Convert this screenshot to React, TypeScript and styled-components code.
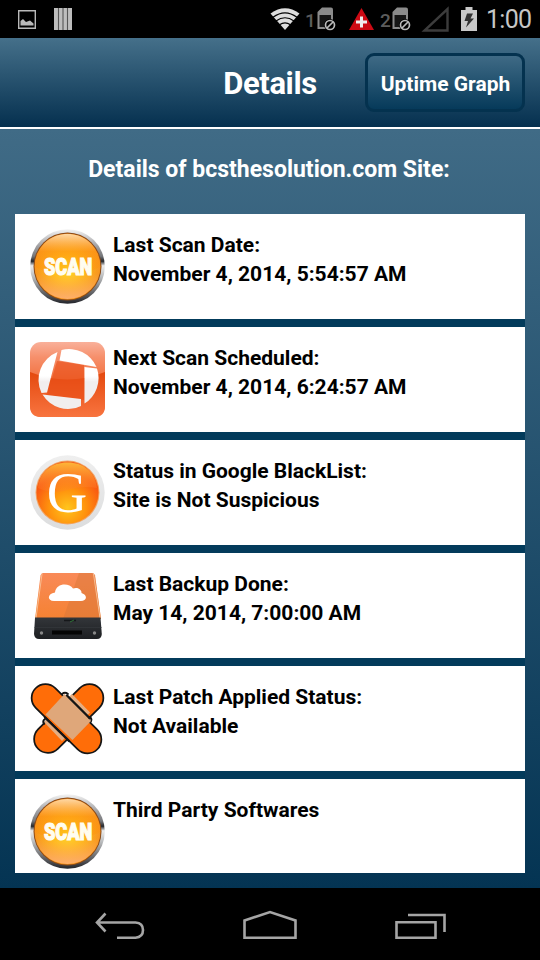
import type { ReactNode } from 'react';
import styled, { createGlobalStyle } from 'styled-components';

const GlobalStyle = createGlobalStyle`
  * {
    box-sizing: border-box;
  }
  body {
    margin: 0;
    background: #000;
    font-family: Roboto, 'Liberation Sans', sans-serif;
  }
`;

const Screen = styled.div`
  display: flex;
  flex-direction: column;
  width: 540px;
  height: 960px;
  overflow: hidden;
  background: #000;
`;

const StatusBar = styled.div`
  display: flex;
  justify-content: space-between;
  height: 38px;
  padding: 0 9px 0 18px;
  background: #000;
`;
const StatusGroup = styled.div`
  display: flex;
  align-items: center;
`;
const StatusIcon = styled.svg<{ $gap?: number }>`
  flex: none;
  margin-left: ${({ $gap = 0 }) => $gap}px;
`;
const SimNumber = styled.span<{ $gap: number }>`
  width: 11px;
  margin: 3px 0 0 ${({ $gap }) => $gap}px;
  font-size: 19px;
  font-weight: 500;
  line-height: 20px;
  color: #5c5c5c;
`;
const Clock = styled.span`
  width: 45px;
  margin: 2px 0 0 9px;
  font-size: 25px;
  line-height: 30px;
  letter-spacing: -0.7px;
  white-space: nowrap;
  color: #c6c6c6;
`;

const Header = styled.header`
  display: grid;
  grid-template-columns: 1fr auto 1fr;
  align-items: center;
  height: 91px;
  padding: 0 15px;
  border-bottom: 2px solid #fff;
  background: linear-gradient(#45708a, #05304f);
`;
const Title = styled.h1`
  grid-column: 2;
  margin: 0;
  padding-top: 2px;
  font-size: 31px;
  font-weight: 700;
  line-height: 36px;
  letter-spacing: -0.4px;
  color: #fff;
`;
const HeaderButton = styled.button`
  justify-self: end;
  width: 160px;
  height: 59px;
  padding: 2px 0 0 1px;
  border: 3px solid #04324f;
  border-radius: 9px;
  background: linear-gradient(#3f6a85, #063a5a);
  font-family: inherit;
  font-size: 21px;
  font-weight: 700;
  white-space: nowrap;
  color: #fff;
`;

const Content = styled.main`
  height: 759px;
  padding: 0 15px 15px;
  background: linear-gradient(#406b86, #043453);
`;
const Heading = styled.h2`
  display: flex;
  align-items: center;
  justify-content: center;
  height: 85px;
  margin: 0;
  padding: 0 2px 5px 0;
  font-size: 23px;
  font-weight: 700;
  white-space: nowrap;
  color: #fff;
`;
const List = styled.ul`
  display: flex;
  flex-direction: column;
  gap: 8px;
  height: 659px;
  margin: 0;
  padding: 0;
  overflow: hidden;
  list-style: none;
  background: #033b5b;
`;
const Row = styled.li`
  display: flex;
  flex: none;
  gap: 8px;
  height: 105px;
  padding: 15px;
  background: #fff;
`;
const RowIcon = styled.svg`
  flex: none;
  width: 75px;
  height: 75px;
  overflow: visible;
`;
const ScanLabel = styled.text`
  font-family: Roboto, 'Liberation Sans', sans-serif;
  font-size: 24px;
  font-weight: 900;
  fill: #fffdf0;
  stroke: #fffdf0;
  stroke-width: 1.2px;
`;
const RowText = styled.div`
  padding-top: 2px;
  font-size: 21px;
  font-weight: 700;
  line-height: 29px;
  white-space: nowrap;
  color: #000;
`;

const NavBar = styled.nav`
  display: grid;
  grid-template-columns: repeat(3, 150px);
  justify-content: center;
  height: 72px;
  padding-top: 20px;
  background: #000;
`;
const NavButton = styled.button`
  display: flex;
  justify-content: center;
  padding: 0;
  border: 0;
  background: none;
`;

const SimIcon = () => (
  <StatusIcon $gap={1} width="20" height="24" viewBox="0 0 20 24" fill="none">
    <path d="M5 0.5H14Q16 0.5 16 2.5V22H0.5V5Z" fill="#8b8b8b" />
    <path d="M2.5 8H14V20H2.5Z" fill="#161616" />
    <circle cx="13" cy="18" r="6" fill="#000" />
    <circle cx="13" cy="18" r="4.5" stroke="#bababa" strokeWidth="1.7" />
    <path d="M10 21L16 15" stroke="#bababa" strokeWidth="1.7" />
  </StatusIcon>
);

const ScanIcon = ({ id }: { id: string }) => (
  <RowIcon viewBox="0 0 75 75">
    <defs>
      <linearGradient id={`${id}-ring`} x2="0" y2="1">
        <stop offset="0" stopColor="#f4f4f4" />
        <stop offset="0.22" stopColor="#a3a3a6" />
        <stop offset="0.36" stopColor="#77787b" />
        <stop offset="0.43" stopColor="#26282c" />
        <stop offset="0.49" stopColor="#ededed" />
        <stop offset="0.64" stopColor="#b9bbbd" />
        <stop offset="0.84" stopColor="#68696c" />
        <stop offset="1" stopColor="#23252b" />
      </linearGradient>
      <radialGradient id={`${id}-face`} cx="0.5" cy="0.53" r="0.55">
        <stop offset="0" stopColor="#ffdf20" />
        <stop offset="0.45" stopColor="#ffb912" />
        <stop offset="1" stopColor="#f4881a" />
      </radialGradient>
      <linearGradient id={`${id}-gloss`} x2="0" y2="1">
        <stop offset="0" stopColor="#ffe0b4" stopOpacity="0.9" />
        <stop offset="0.45" stopColor="#ff9512" stopOpacity="0.6" />
        <stop offset="1" stopColor="#ff8f00" stopOpacity="0.25" />
      </linearGradient>
      <linearGradient id={`${id}-shine`} x2="0" y2="1">
        <stop offset="0.6" stopColor="#ffb060" stopOpacity="0.1" />
        <stop offset="1" stopColor="#ffb27a" stopOpacity="0.85" />
      </linearGradient>
    </defs>
    <circle cx="37.5" cy="37.5" r="37.3" fill={`url(#${id}-ring)`} />
    <circle cx="37.5" cy="37.5" r="34" fill="#8a4a18" />
    <circle cx="37.5" cy="37.5" r="33" fill={`url(#${id}-face)`} />
    <circle cx="37.5" cy="37.5" r="32.5" fill={`url(#${id}-shine)`} />
    <path
      d="M5.5 38C5 19 19 5 37.5 5S70 19 69.5 38Q60 44 37.5 44T5.5 38Z"
      fill={`url(#${id}-gloss)`}
    />
    <g transform="translate(14 45.5) scale(0.755 1.03)">
      <ScanLabel>SCAN</ScanLabel>
    </g>
  </RowIcon>
);

const ScheduleIcon = () => (
  <RowIcon viewBox="0 0 75 75">
    <defs>
      <linearGradient id="schedule-bg" x2="0" y2="1">
        <stop offset="0" stopColor="#f9b09a" />
        <stop offset="0.2" stopColor="#f6906c" />
        <stop offset="0.5" stopColor="#f2713f" />
        <stop offset="1" stopColor="#f3672f" />
      </linearGradient>
      <linearGradient id="schedule-low" x2="0" y2="1">
        <stop offset="0" stopColor="#e4490f" />
        <stop offset="1" stopColor="#f8743f" />
      </linearGradient>
      <linearGradient id="schedule-blade" x2="0" y2="1">
        <stop offset="0.45" stopColor="#fff" />
        <stop offset="0.55" stopColor="#f1eeee" />
      </linearGradient>
    </defs>
    <rect width="75" height="75" rx="11" fill="url(#schedule-bg)" />
    <path
      d="M0 30Q37 45 75 30V64Q75 75 64 75H11Q0 75 0 64Z"
      fill="url(#schedule-low)"
    />
    <path d="M27 19L54 23V58L17 53Z" fill="#e94f18" opacity="0.6" />
    <path
      d="M27.5 10L17 50.5L11.5 51A30 30 0 0 1 27.500 10ZM31.500 8L29.500 18.500L66.500 25A30 30 0 0 0 31.500 8ZM54.500 25L67 26.500A30 30 0 0 1 54.500 61.500ZM12.500 52.500L51 57V64A30 30 0 0 1 12.500 52.500Z"
      fill="url(#schedule-blade)"
    />
  </RowIcon>
);

const GoogleIcon = () => (
  <RowIcon viewBox="0 0 75 75">
    <defs>
      <linearGradient id="g-ring" x2="0" y2="1">
        <stop offset="0" stopColor="#efefef" />
        <stop offset="1" stopColor="#dcddde" />
      </linearGradient>
      <radialGradient id="g-face" cx="0.5" cy="0.75" r="0.75">
        <stop offset="0" stopColor="#ffc51c" />
        <stop offset="0.4" stopColor="#ff920d" />
        <stop offset="0.75" stopColor="#f95a12" />
        <stop offset="1" stopColor="#f4601e" />
      </radialGradient>
      <linearGradient id="g-gloss" x2="0" y2="1">
        <stop offset="0" stopColor="#ffc53c" stopOpacity="0.85" />
        <stop offset="1" stopColor="#ff7a2c" stopOpacity="0.25" />
      </linearGradient>
    </defs>
    <circle cx="37.5" cy="37.5" r="37.2" fill="url(#g-ring)" />
    <circle cx="37.5" cy="37.5" r="32" fill="#f1a565" />
    <circle cx="37.5" cy="37.5" r="31" fill="url(#g-face)" />
    <path
      d="M8 33C10 16 22 7.5 37.5 7.5S65 16 67 33Q52 30 37.5 35T8 33Z"
      fill="url(#g-gloss)"
    />
    <text
      x="37"
      y="57"
      textAnchor="middle"
      fontFamily="'Liberation Serif', serif"
      fontSize="56"
      fill="#fff"
    >
      G
    </text>
  </RowIcon>
);

const BackupIcon = () => (
  <RowIcon viewBox="0 0 75 75">
    <defs>
      <linearGradient id="drive-top" x2="0" y2="1">
        <stop offset="0" stopColor="#f98a58" />
        <stop offset="1" stopColor="#f58232" />
      </linearGradient>
      <linearGradient id="drive-base" x2="0" y2="1">
        <stop offset="0" stopColor="#33363a" />
        <stop offset="1" stopColor="#1d1f22" />
      </linearGradient>
    </defs>
    <path d="M13 5H62Q64.5 5 65 7.5L71 51H5L10.5 7.5Q11 5 13 5Z" fill="url(#drive-top)" />
    <path d="M49 5H62Q64.5 5 65 7.5L71 51H33Z" fill="#d9773a" opacity="0.5" />
    <path d="M12 6L6 50M63.5 6L70 50" stroke="#f9bd8f" strokeWidth="1" />
    <path d="M5 49.5H70.5L71.8 66Q71.5 71 67 71H9Q4.5 71 4 66Z" fill="url(#drive-base)" />
    <path d="M4.5 59.5H71.5" stroke="#34373b" strokeWidth="0.8" />
    <rect x="22" y="62.5" width="30" height="4" fill="#050505" />
    <circle cx="11.5" cy="65" r="1.7" fill="#888" />
    <circle cx="64.5" cy="65" r="1.7" fill="#888" />
    <path d="M34 52.5H46" stroke="#15171a" strokeWidth="1.5" />
    <path d="M40 54L44 52" stroke="#2f7138" strokeWidth="1" />
    <path
      d="M24 33C17 33 17 25.5 25 24.5C26 15 39 14.5 43 20.5C48 18.5 52 22 51.500 25C58 27 57 33 51 33Z"
      fill="#fff"
    />
  </RowIcon>
);

const PatchIcon = () => (
  <RowIcon viewBox="0 0 75 75" strokeLinecap="round">
    <path d="M59.500 17L18 58" stroke="#151515" strokeWidth="29.500" />
    <path d="M59.500 17L18 58" stroke="#ff6d08" strokeWidth="26" />
    <path d="M42 13L60 31.5L32 60L14 41Z" fill="#e5ae82" />
    <path
      d="M32 13Q35 10.5 38 13M60 36Q63 38 60 42M15 38Q12 40 14 43"
      stroke="#151515"
      strokeWidth="1.8"
      fill="none"
    />
    <path d="M15.5 17L57.500 58.500" stroke="#151515" strokeWidth="29.500" />
    <path d="M15.5 17L57.500 58.500" stroke="#ff6d08" strokeWidth="26" />
    <path d="M15.5 33.5L34.5 13L61 40L42.500 59Z" fill="#dfa77a" />
    <path d="M37 14.500L60 37.500M15 36.500L39 60" stroke="#151515" strokeWidth="2.400" />
  </RowIcon>
);

type Detail = {
  label: string;
  value?: string;
  icon: ReactNode;
};

const details: Detail[] = [
  {
    label: 'Last Scan Date:',
    value: 'November 4, 2014, 5:54:57 AM',
    icon: <ScanIcon id="last-scan" />,
  },
  {
    label: 'Next Scan Scheduled:',
    value: 'November 4, 2014, 6:24:57 AM',
    icon: <ScheduleIcon />,
  },
  {
    label: 'Status in Google BlackList:',
    value: 'Site is Not Suspicious',
    icon: <GoogleIcon />,
  },
  {
    label: 'Last Backup Done:',
    value: 'May 14, 2014, 7:00:00 AM',
    icon: <BackupIcon />,
  },
  {
    label: 'Last Patch Applied Status:',
    value: 'Not Available',
    icon: <PatchIcon />,
  },
  { label: 'Third Party Softwares', icon: <ScanIcon id="third-party" /> },
];

const App = () => (
  <>
    <GlobalStyle />
    <Screen>
      <StatusBar>
        <StatusGroup>
          <StatusIcon width="18" height="19" viewBox="0 0 18 19" fill="none">
            <path d="M0.7 0.7H17.3V18.3H0.7Z" stroke="#b9b9b9" strokeWidth="1.4" />
            <path d="M2.5 15.5V11L5 9L8 12L12 10.5L15.5 13.5V15.5Z" fill="#b9b9b9" />
          </StatusIcon>
          <StatusIcon $gap={18} width="18" height="22" viewBox="0 0 18 22">
            <path d="M0 0H18V22H0Z" fill="#bdbdbd" />
            <path d="M4.5 0V22M9 0V22M13.5 0V22" stroke="#555" strokeWidth="1.1" />
          </StatusIcon>
        </StatusGroup>
        <StatusGroup>
          <StatusIcon width="30" height="22" viewBox="0 0 30 22">
            <path d="M0.5 5.5Q15 -5 29.5 5.5L15 22Z" fill="#dedede" />
            <path
              d="M3 9.3Q15 0.5 27 9.3M6 13Q15 6.5 24 13M9.5 16.8Q15 13 20.5 16.8"
              fill="none"
              stroke="#000"
              strokeWidth="1.2"
            />
          </StatusIcon>
          <SimNumber $gap={5}>1</SimNumber>
          <SimIcon />
          <StatusIcon $gap={12} width="25" height="22" viewBox="0 0 25 22">
            <path d="M12.5 0L25 22H0Z" fill="#cc0a14" />
            <path d="M12.5 8.5V19.5M7 14H18" stroke="#eee" strokeWidth="3" />
          </StatusIcon>
          <SimNumber $gap={6}>2</SimNumber>
          <SimIcon />
          <StatusIcon $gap={9} width="28" height="26" viewBox="0 0 28 26">
            <path d="M26.5 3V24.5H3.5Z" fill="none" stroke="#3c3c3c" strokeWidth="2.4" />
          </StatusIcon>
          <StatusIcon $gap={12} width="16" height="24" viewBox="0 0 16 24">
            <path d="M4.5 0H11.5V3H16V24H0V3H4.5Z" fill="#c9c9c9" />
            <path d="M6 6.5H12L9.5 11.5H13L5 20.5L7 14H3.5Z" fill="#333" />
          </StatusIcon>
          <Clock>1:00</Clock>
        </StatusGroup>
      </StatusBar>
      <Header>
        <Title>Details</Title>
        <HeaderButton>Uptime Graph</HeaderButton>
      </Header>
      <Content>
        <Heading>Details of bcsthesolution.com Site:</Heading>
        <List>
          {details.map(({ label, value, icon }) => (
            <Row key={label}>
              {icon}
              <RowText>
                <div>{label}</div>
                {value && <div>{value}</div>}
              </RowText>
            </Row>
          ))}
        </List>
      </Content>
      <NavBar>
        <NavButton aria-label="Back">
          <svg width="50" height="32" viewBox="0 0 50 32" fill="none" stroke="#a5a5a5" strokeWidth="2.6">
            <path d="M10.5 5.5L2 14.5L10.5 23.5M2 14.5H40.5Q48 15 48 22T40.5 29.7H22" />
          </svg>
        </NavButton>
        <NavButton aria-label="Home">
          <svg width="54" height="32" viewBox="0 0 54 32" fill="none" stroke="#a5a5a5" strokeWidth="2.6">
            <path d="M1.5 12.5L27 4L52.5 12.5V29.7H1.5Z" />
          </svg>
        </NavButton>
        <NavButton aria-label="Recent apps">
          <svg width="52" height="32" viewBox="0 0 52 32" fill="none" stroke="#a5a5a5" strokeWidth="2.6">
            <path d="M2.5 14.3H41.5V29.7H2.5ZM14 7H50.500V24" />
          </svg>
        </NavButton>
      </NavBar>
    </Screen>
  </>
);

export default App;
